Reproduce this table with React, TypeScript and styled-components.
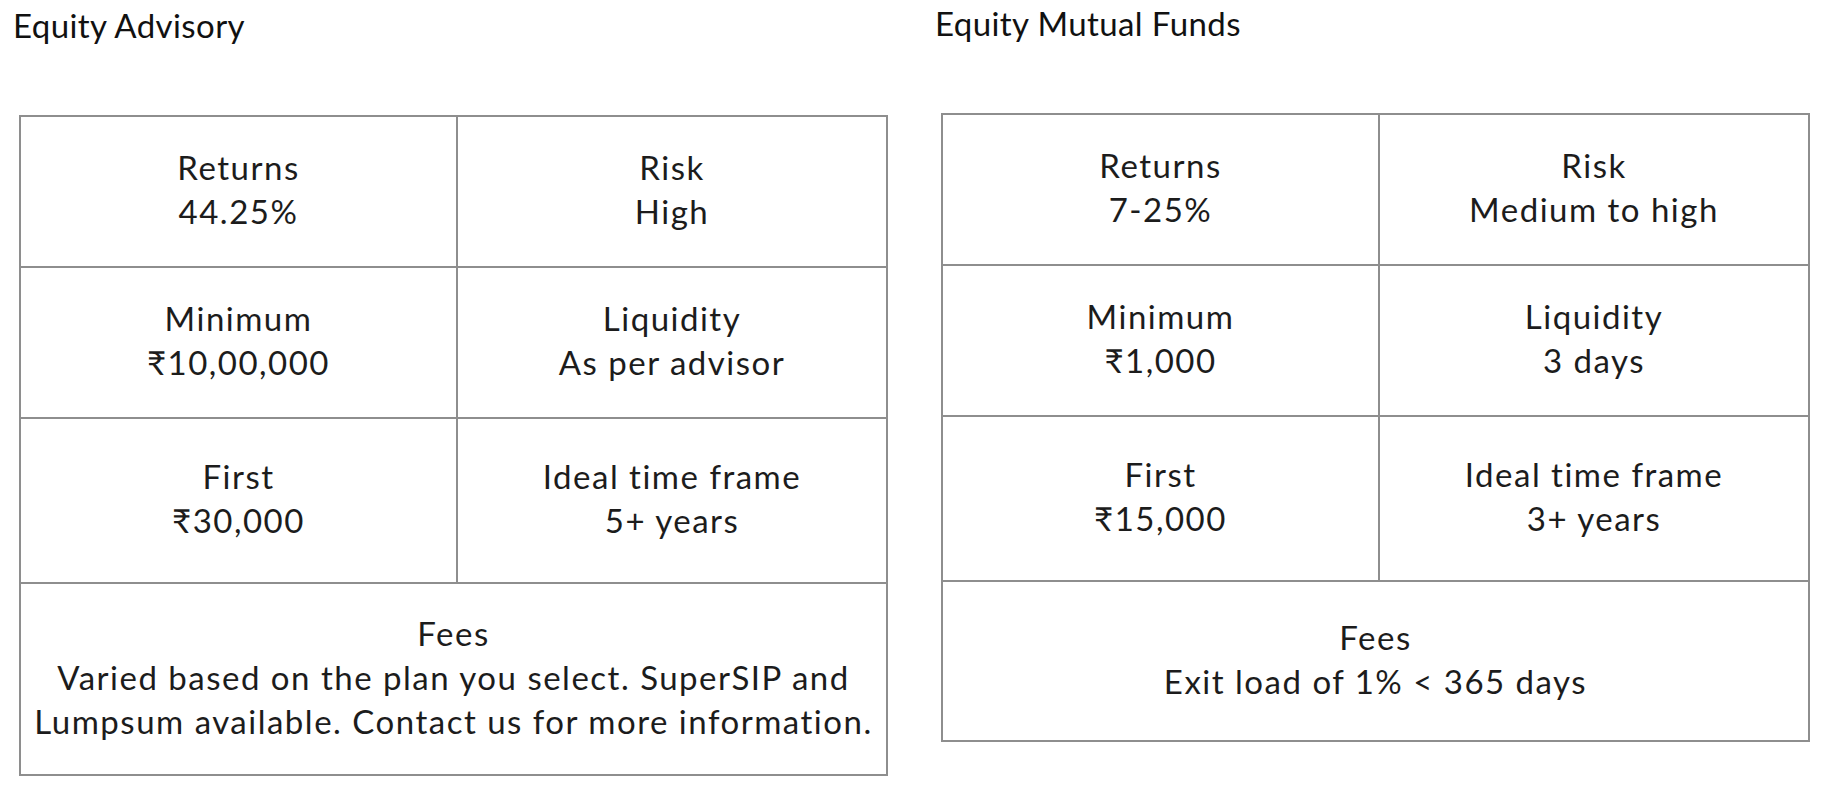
import React from "react";
import styled, { createGlobalStyle } from "styled-components";

const GlobalStyle = createGlobalStyle`
  html, body {
    margin: 0;
    padding: 0;
    background: #ffffff;
  }
  body {
    font-family: "Lato", "Open Sans", sans-serif;
    color: #1c1c1c;
  }
`;

const Page = styled.div`
  display: flex;
  align-items: flex-start;
  gap: 49px;
  padding: 3px 0 0 13px;
  width: 1822px;
  box-sizing: border-box;
`;

const Column = styled.section<{ $lift?: number }>`
  display: flex;
  flex-direction: column;
  width: 873px;
  margin-top: ${(p) => -(p.$lift ?? 0)}px;
`;

const Title = styled.h2`
  margin: 0 0 67px 0;
  font-size: 33px;
  line-height: 45px;
  font-weight: 400;
  letter-spacing: 0.4px;
  color: #111;
`;

const Grid = styled.div<{ $rows: string }>`
  margin-left: 6px;
  display: grid;
  grid-template-columns: 437px 430px;
  grid-template-rows: ${(p) => p.$rows};
  border-top: 2px solid #8e8e8e;
  border-left: 2px solid #8e8e8e;
  width: 867px;
`;

const Cell = styled.div<{ $span?: boolean }>`
  grid-column: ${(p) => (p.$span ? "1 / span 2" : "auto")};
  border-right: 2px solid #8e8e8e;
  border-bottom: 2px solid #8e8e8e;
  display: flex;
  flex-direction: column;
  align-items: center;
  justify-content: center;
  text-align: center;
  font-size: 33px;
  line-height: 44px;
  letter-spacing: 1.5px;
  padding: ${(p) => (p.$span ? "27px 8px 31px" : "0 8px 6px")};
  min-height: ${(p) => (p.$span ? "160px" : "0")};
  box-sizing: border-box;
  color: #1c1c1c;
`;

const Line = styled.span`
  display: block;
  white-space: nowrap;
`;

type Item = { label: string; value: string };
type Product = { title: string; items: Item[]; fees: string[]; lift?: number };

const products: Product[] = [
  {
    title: "Equity Advisory",
    items: [
      { label: "Returns", value: "44.25%" },
      { label: "Risk", value: "High" },
      { label: "Minimum", value: "₹10,00,000" },
      { label: "Liquidity", value: "As per advisor" },
      { label: "First", value: "₹30,000" },
      { label: "Ideal time frame", value: "5+ years" },
    ],
    fees: [
      "Varied based on the plan you select. SuperSIP and",
      "Lumpsum available. Contact us for more information.",
    ],
  },
  {
    title: "Equity Mutual Funds",
    lift: 2,
    items: [
      { label: "Returns", value: "7-25%" },
      { label: "Risk", value: "Medium to high" },
      { label: "Minimum", value: "₹1,000" },
      { label: "Liquidity", value: "3 days" },
      { label: "First", value: "₹15,000" },
      { label: "Ideal time frame", value: "3+ years" },
    ],
    fees: ["Exit load of 1% < 365 days"],
  },
];

export default function App() {
  return (
    <>
      <GlobalStyle />
      <Page>
        {products.map((p) => (
          <Column key={p.title} $lift={p.lift}>
            <Title>{p.title}</Title>
            <Grid $rows="151px 151px 165px auto">
              {p.items.map((it) => (
                <Cell key={it.label}>
                  <Line>{it.label}</Line>
                  <Line>{it.value}</Line>
                </Cell>
              ))}
              <Cell $span>
                <Line>Fees</Line>
                {p.fees.map((f) => (
                  <Line key={f}>{f}</Line>
                ))}
              </Cell>
            </Grid>
          </Column>
        ))}
      </Page>
    </>
  );
}
